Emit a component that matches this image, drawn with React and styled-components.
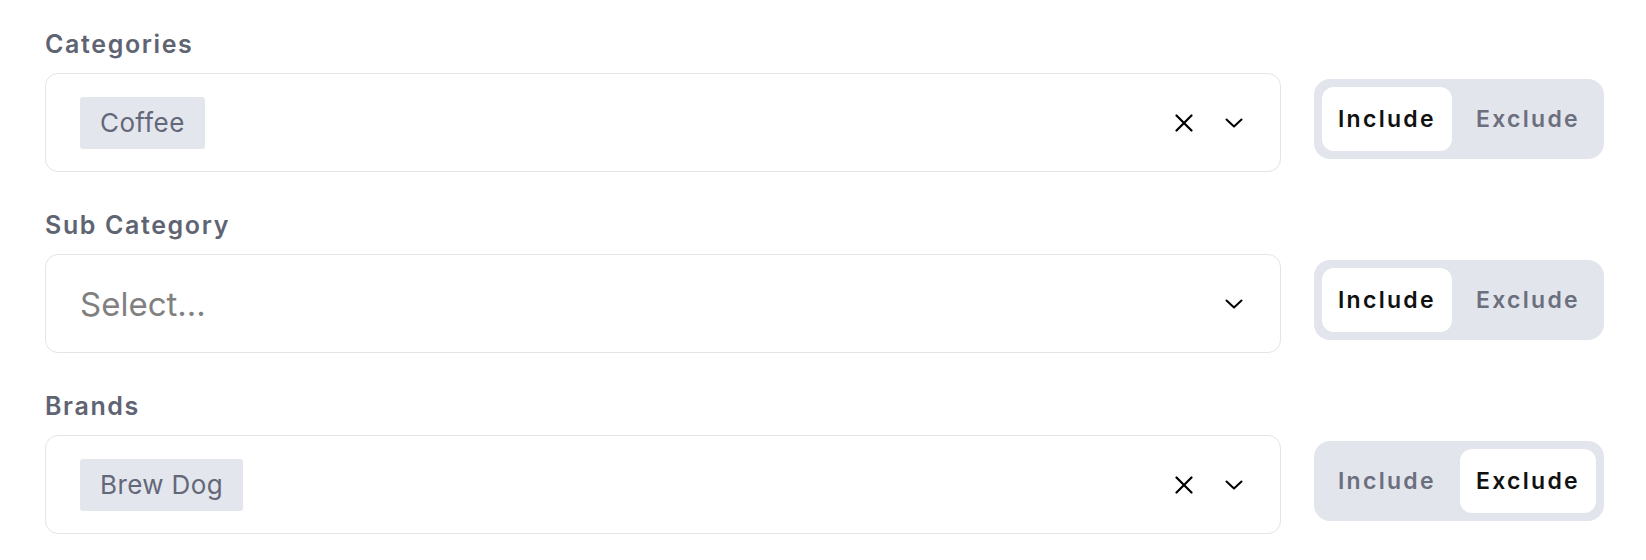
import React, { useState } from 'react'
import styled, { createGlobalStyle } from 'styled-components'

const GlobalStyle = createGlobalStyle`
  body {
    margin: 0;
    background: #ffffff;
    font-family: Inter, "Liberation Sans", sans-serif;
  }
`

const Page = styled.div`
  display: flex;
  flex-direction: column;
  gap: 37px;
  padding: 28px 42px 0 45px;
`

const Field = styled.div`
  display: flex;
  flex-direction: column;
`

const Label = styled.div`
  font-size: 25px;
  line-height: 32px;
  font-weight: 600;
  letter-spacing: 0.065em;
  color: #5f6473;
  margin-bottom: 13px;
`

const Row = styled.div`
  display: flex;
  align-items: center;
  gap: 33px;
`

const SelectBox = styled.div`
  flex: 1;
  height: 99px;
  box-sizing: border-box;
  display: flex;
  align-items: center;
  border: 1.5px solid #e2e4ea;
  border-radius: 13px;
  padding: 0 37px 0 34px;
`

const Values = styled.div`
  flex: 1;
  display: flex;
  align-items: center;
`

const Tag = styled.div`
  background: #e4e6ee;
  border-radius: 3px;
  height: 52px;
  display: flex;
  align-items: center;
  padding: 0 20px;
  font-size: 26px;
  letter-spacing: 0.015em;
  color: #636878;
`

const Placeholder = styled.div`
  font-size: 33px;
  color: #808080;
`

const Indicators = styled.div`
  display: flex;
  align-items: center;
  gap: 32px;
`

const IconButton = styled.span`
  display: flex;
  align-items: center;
  justify-content: center;
  color: #000;
`

const Toggle = styled.div`
  display: flex;
  gap: 8px;
  padding: 8px;
  background: #e3e5ec;
  border-radius: 16px;
  margin-bottom: 7px;
`

const ToggleButton = styled.button`
  height: 64px;
  padding: 0 16px;
  border: none;
  border-radius: 12px;
  font-family: inherit;
  font-size: 23px;
  font-weight: 600;
  letter-spacing: 0.1em;
  cursor: pointer;
  background: ${({ $active }) => ($active ? '#ffffff' : 'transparent')};
  color: ${({ $active }) => ($active ? '#111111' : '#6b6f7e')};
`

const ClearIcon = () => (
  <svg width="18" height="18" viewBox="0 0 18 18">
    <path d="M1.5 1.5 L16.5 16.5 M16.5 1.5 L1.5 16.5" stroke="currentColor" strokeWidth="2.2" strokeLinecap="round" />
  </svg>
)

const ChevronIcon = () => (
  <svg width="18" height="10" viewBox="0 0 18 10">
    <path d="M1.5 1.5 L9 8.5 L16.5 1.5" stroke="currentColor" strokeWidth="2" fill="none" strokeLinecap="round" strokeLinejoin="round" />
  </svg>
)

const FilterField = ({ label, value, initialMode }) => {
  const [mode, setMode] = useState(initialMode)
  return (
    <Field>
      <Label>{label}</Label>
      <Row>
        <SelectBox>
          <Values>
            {value ? <Tag>{value}</Tag> : <Placeholder>Select...</Placeholder>}
          </Values>
          <Indicators>
            {value && (
              <IconButton>
                <ClearIcon />
              </IconButton>
            )}
            <IconButton>
              <ChevronIcon />
            </IconButton>
          </Indicators>
        </SelectBox>
        <Toggle>
          <ToggleButton $active={mode === 'include'} onClick={() => setMode('include')}>
            Include
          </ToggleButton>
          <ToggleButton $active={mode === 'exclude'} onClick={() => setMode('exclude')}>
            Exclude
          </ToggleButton>
        </Toggle>
      </Row>
    </Field>
  )
}

export default function App() {
  return (
    <>
      <GlobalStyle />
      <Page>
        <FilterField label="Categories" value="Coffee" initialMode="include" />
        <FilterField label="Sub Category" initialMode="include" />
        <FilterField label="Brands" value="Brew Dog" initialMode="exclude" />
      </Page>
    </>
  )
}
